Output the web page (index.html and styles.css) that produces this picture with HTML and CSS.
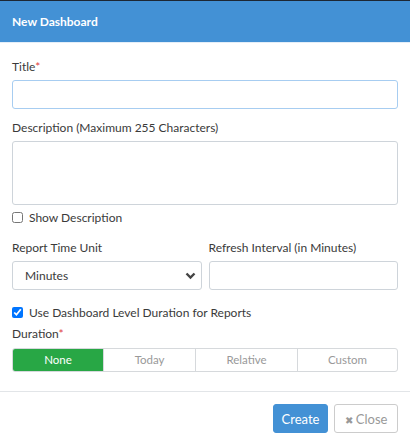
FILE: index.html
```html
<!DOCTYPE html>
<html>
<head>
<meta charset="utf-8">
<link rel="stylesheet" href="styles.css">
</head>
<body>
<div class="modal">
  <div class="modal-header">New Dashboard</div>
  <div class="modal-body">
    <div class="field">
      <label class="lbl">Title<span class="req">*</span></label>
      <input class="ctrl focus" type="text">
    </div>
    <div class="field">
      <label class="lbl">Description (Maximum 255 Characters)</label>
      <textarea class="ctrl area"></textarea>
    </div>
    <label class="check"><input type="checkbox"> Show Description</label>
    <div class="row">
      <div class="col">
        <label class="lbl">Report Time Unit</label>
        <div class="select ctrl"><span>Minutes</span>
          <svg width="11" height="8" viewBox="0 0 11 8"><path d="M1.5 1.5 L5.5 5.5 L9.5 1.5" fill="none" stroke="#444" stroke-width="2.4"/></svg>
        </div>
      </div>
      <div class="col">
        <label class="lbl">Refresh Interval (in Minutes)</label>
        <input class="ctrl" type="text">
      </div>
    </div>
    <label class="check check2"><input type="checkbox" checked> Use Dashboard Level Duration for Reports</label>
    <label class="lbl dur">Duration<span class="req">*</span></label>
    <div class="btn-group">
      <div class="seg s1 active">None</div>
      <div class="seg s2">Today</div>
      <div class="seg s3">Relative</div>
      <div class="seg s4">Custom</div>
    </div>
  </div>
  <div class="modal-footer">
    <button class="btn primary">Create</button>
    <button class="btn default"><span class="x">&#10006;</span> Close</button>
  </div>
</div>
</body>
</html>
```
FILE: styles.css
```css
html, body { margin: 0; padding: 0; background: #fff; }
body { font-family: Lato, "Open Sans", sans-serif; font-size: 12px; color: #3a3a3a; }
.modal { width: 410px; height: 445px; border-top: 1px solid #1d2733; box-sizing: border-box; }
.modal-header { height: 42px; background: #4391d5; color: #fff; font-weight: bold; font-size: 12px; line-height: 42px; padding-left: 12px; border-bottom: 1px solid #e4eef8; box-sizing: border-box; }
.modal-body { padding: 15px 12px 0 12px; }
.field { display: flex; flex-direction: column; }
.lbl { display: block; line-height: 17px; margin-bottom: 5px; }
.req { color: #e0403f; }
.ctrl { box-sizing: border-box; width: 100%; height: 29px; border: 1px solid #ced4da; border-radius: 3px; margin: 0 0 14px 0; font: inherit; padding: 0 8px; outline: none; }
.ctrl.focus { border-color: #a7cdf1; margin-bottom: 10px; }
.ctrl.area { height: 64px; resize: none; margin-bottom: 4px; }
.check { display: flex; align-items: center; gap: 6px; line-height: 17px; margin-bottom: 13px; }
.check input { margin: 0; width: 11px; height: 11px; }
.row { display: flex; gap: 7px; }
.col { flex: 1; min-width: 0; }
.select { display: flex; align-items: center; justify-content: space-between; padding: 0 5px 0 12px; margin-bottom: 13px; }
.check2 { margin-bottom: 4px; }
.dur { margin-bottom: 6px; }
.btn-group { display: flex; height: 24px; border: 1px solid #d6d9dc; border-radius: 3px; box-sizing: border-box; overflow: hidden; }
.seg { flex-basis: 0; text-align: center; line-height: 22px; color: #999; border-left: 1px solid #d6d9dc; font-size: 11.5px; }
.s1 { flex-grow: 91; border-left: none; }
.s2 { flex-grow: 92; }
.s3 { flex-grow: 102; }
.s4 { flex-grow: 100; }
.seg.active { background: #28a745; color: #fff; }
.modal-footer { margin-top: 19px; border-top: 1px solid #e2e5e8; padding: 12px 12px 0 0; display: flex; justify-content: flex-end; gap: 6px; }
.btn { height: 29px; border-radius: 3px; font: inherit; font-size: 13px; padding: 0; box-sizing: border-box; }
.btn.primary { background: #4391d5; border: 1px solid #4391d5; color: #fff; width: 55px; }
.btn.default { background: #fff; border: 1px solid #ccc; color: #999; width: 64px; }
.x { font-size: 10px; color: #999; }
```
